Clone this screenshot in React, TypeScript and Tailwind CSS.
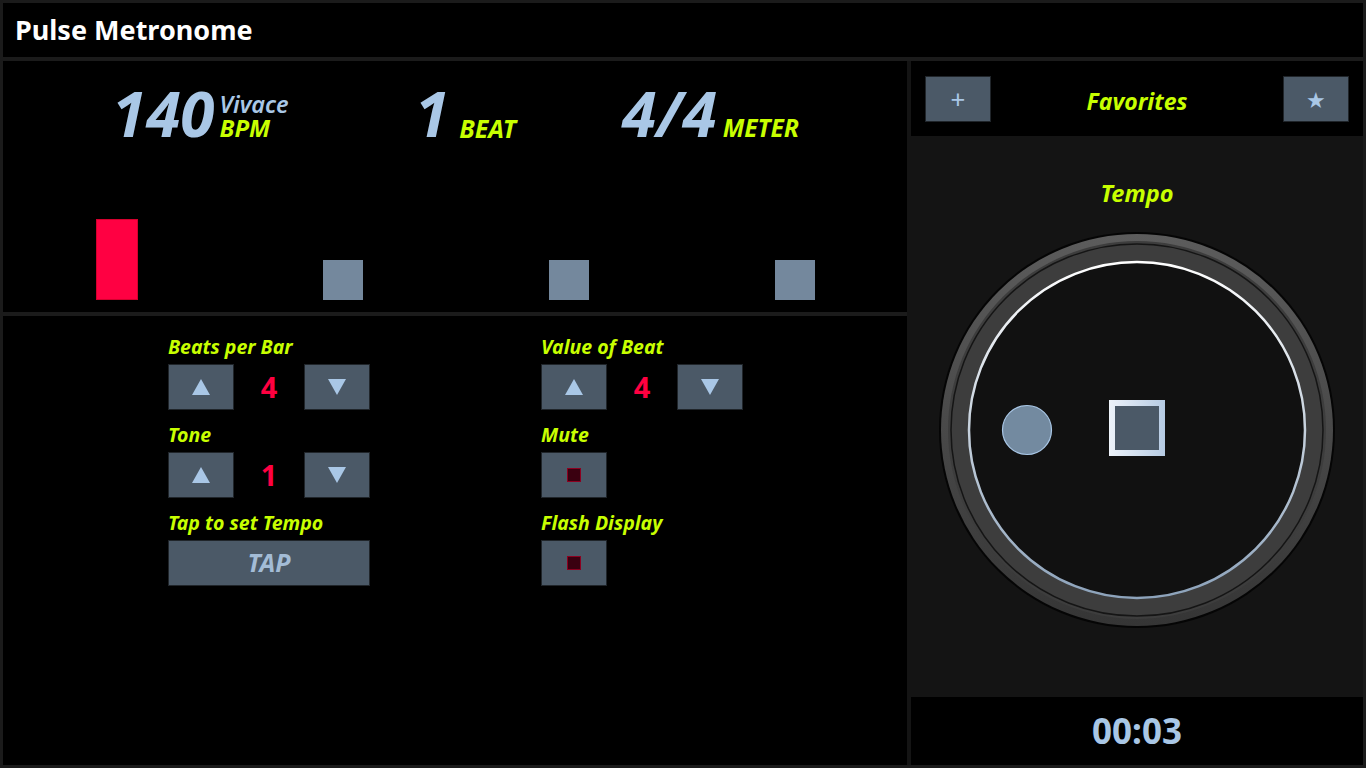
import React from "react";

const font = { fontFamily: '"Noto Sans", "Open Sans", sans-serif' };

const Tri = ({ up }: { up?: boolean }) => (
  <svg width="20" height="18" viewBox="0 0 20 18">
    <polygon points={up ? "10,1 19,17 1,17" : "1,1 19,1 10,17"} fill="#a9c7e6" />
  </svg>
);

const Btn = ({ children, wide }: { children: React.ReactNode; wide?: boolean }) => (
  <button
    className={
      wide
        ? "flex h-[46px] w-[202px] items-center justify-center border border-[#20252a] bg-[#4b5967]"
        : "flex h-[46px] w-[66px] items-center justify-center border border-[#20252a] bg-[#4b5967]"
    }
  >
    {children}
  </button>
);

const Label = ({ children }: { children: React.ReactNode }) => (
  <div className="mb-[4px] h-[26px] text-[19.5px] font-bold italic leading-[26px] whitespace-nowrap text-[#c8ff00]">
    {children}
  </div>
);

const Stepper = ({ value }: { value: string }) => (
  <div className="flex items-center">
    <Btn>
      <Tri up />
    </Btn>
    <div className="w-[70px] text-center text-[29px] font-bold text-[#ff0040]">{value}</div>
    <Btn>
      <Tri />
    </Btn>
  </div>
);

const Check = () => (
  <Btn>
    <div className="h-[14px] w-[14px] border border-[#8c0020] bg-[#3a0010]" />
  </Btn>
);

const Dial = () => (
  <svg width="400" height="400" viewBox="0 0 400 400">
    <defs>
      <linearGradient id="ring" x1="0" y1="0" x2="0" y2="1">
        <stop offset="0" stopColor="#5c5c5c" />
        <stop offset="1" stopColor="#353535" />
      </linearGradient>
      <linearGradient id="edge" x1="0" y1="0" x2="0" y2="1">
        <stop offset="0" stopColor="#ffffff" />
        <stop offset="1" stopColor="#8da3bb" />
      </linearGradient>
      <linearGradient id="sq" x1="0" y1="0" x2="1" y2="0">
        <stop offset="0" stopColor="#eef3fa" />
        <stop offset="1" stopColor="#b6cbe3" />
      </linearGradient>
    </defs>
    <circle cx="200" cy="200" r="198" fill="#050505" />
    <circle cx="200" cy="200" r="196" fill="url(#ring)" />
    <circle cx="200" cy="200" r="189" fill="#3d3d3d" />
    <circle cx="200" cy="200" r="186" fill="none" stroke="#151515" strokeWidth="1.5" />
    <circle cx="200" cy="200" r="168" fill="#111111" stroke="url(#edge)" strokeWidth="2.5" />
    <circle cx="90" cy="200" r="24.5" fill="#738aa0" stroke="#a9c7e6" strokeWidth="1.2" />
    <rect x="172" y="170" width="56" height="56" fill="url(#sq)" />
    <rect x="178" y="176" width="44" height="44" fill="#4b5967" />
  </svg>
);

export default function App() {
  return (
    <div className="flex h-screen w-screen flex-col gap-[4px] bg-[#1b1b1b] p-[3px]" style={font}>
      <div className="flex h-[54px] items-center bg-black pl-[12px] text-[27px] font-bold text-white">
        Pulse Metronome
      </div>
      <div className="flex min-h-0 flex-1">
        <div className="flex w-[904px] flex-col gap-[4px]">
          <div className="flex h-[251px] flex-col bg-black">
            <div className="flex pl-[109px] pt-[22px]">
              <div className="flex w-[303px] items-end">
                <span className="text-[62px] font-bold italic leading-[60px] text-[#a9c7e6]">140</span>
                <div className="mb-[3px] ml-[5px] flex flex-col">
                  <span className="text-[23.5px] font-semibold italic leading-[24px] text-[#a9c7e6]">Vivace</span>
                  <span className="text-[24px] font-bold italic leading-[24px] text-[#c8ff00]">BPM</span>
                </div>
              </div>
              <div className="flex w-[207px] items-end">
                <span className="text-[62px] font-bold italic leading-[60px] text-[#a9c7e6]">1</span>
                <span className="mb-[3px] ml-[10px] text-[25px] font-bold italic leading-[24px] text-[#c8ff00]">BEAT</span>
              </div>
              <div className="flex items-end">
                <span className="text-[62px] font-bold italic leading-[60px] text-[#a9c7e6]">4/4</span>
                <span className="mb-[3px] ml-[6px] text-[24.5px] font-bold italic leading-[24px] text-[#c8ff00]">METER</span>
              </div>
            </div>
            <div className="mt-auto grid grid-cols-4 items-end pb-[12px]">
              <div className="flex justify-center">
                <div className="ml-[2px] h-[81px] w-[42px] border border-[#d4002e] bg-[#ff0042]" />
              </div>
              <div className="flex justify-center">
                <div className="ml-[2px] h-[40px] w-[40px] bg-[#74889d]" />
              </div>
              <div className="flex justify-center">
                <div className="ml-[2px] h-[40px] w-[40px] bg-[#74889d]" />
              </div>
              <div className="flex justify-center">
                <div className="ml-[2px] h-[40px] w-[40px] bg-[#74889d]" />
              </div>
            </div>
          </div>
          <div className="flex flex-1 gap-[171px] bg-black pl-[165px] pt-[18px]">
            <div className="flex flex-col">
              <Label>Beats per Bar</Label>
              <Stepper value="4" />
              <div className="h-[12px]" />
              <Label>Tone</Label>
              <Stepper value="1" />
              <div className="h-[12px]" />
              <Label>Tap to set Tempo</Label>
              <Btn wide>
                <span className="text-[25px] font-bold italic text-[#a3bcd6]">TAP</span>
              </Btn>
            </div>
            <div className="flex flex-col">
              <Label>Value of Beat</Label>
              <Stepper value="4" />
              <div className="h-[12px]" />
              <Label>Mute</Label>
              <Check />
              <div className="h-[12px]" />
              <Label>Flash Display</Label>
              <Check />
            </div>
          </div>
        </div>
        <div className="flex flex-1 flex-col bg-[#141414]">
          <div className="ml-[4px] flex h-[75px] items-center justify-between bg-black px-[14px]">
            <Btn>
              <span className="text-[26px] leading-none text-[#a9c7e6]">+</span>
            </Btn>
            <span className="mt-[5px] text-[23px] font-bold italic text-[#c8ff00]">Favorites</span>
            <Btn>
              <span className="text-[22px] leading-none text-[#a9c7e6]">★</span>
            </Btn>
          </div>
          <div className="flex flex-1 flex-col items-center pl-[4px]">
            <div className="mt-[40px] text-[23.5px] font-bold italic text-[#c8ff00]">Tempo</div>
            <div className="mt-[19px]">
              <Dial />
            </div>
          </div>
          <div className="ml-[4px] flex h-[68px] items-center justify-center bg-black text-[35px] font-bold text-[#a9c7e6]">
            00:03
          </div>
        </div>
      </div>
    </div>
  );
}
